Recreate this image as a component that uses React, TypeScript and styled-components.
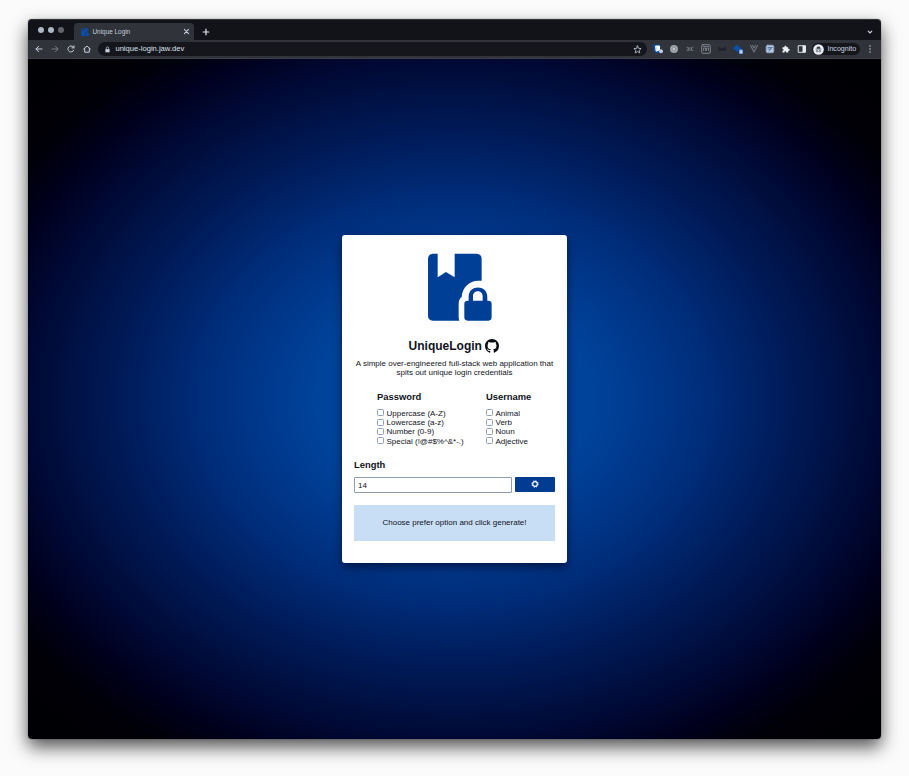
import React from "react";
import styled, { createGlobalStyle } from "styled-components";

const Global = createGlobalStyle`
  * { box-sizing: border-box; }
  body { margin: 0; background: #fbfbfb; font-family: "Liberation Sans", Arial, sans-serif; }
  h1, h2, p { margin: 0; }
`;

const Desktop = styled.div`
  width: 909px;
  height: 776px;
  padding: 19px 28px 36px;
  overflow: hidden;
`;

const Browser = styled.div`
  display: flex;
  flex-direction: column;
  height: 720px;
  border-radius: 4px;
  box-shadow: 0 0 1px rgba(0, 0, 0, 0.7), 0 8px 18px rgba(0, 0, 0, 0.68);
`;

const TabStrip = styled.div`
  display: flex;
  align-items: flex-end;
  height: 21px;
  flex: none;
  padding: 0 7px 0 10px;
  background: #111318;
  border-radius: 4px 4px 0 0;
  border-top: 1px solid #303238;
`;

const Lights = styled.div`
  display: flex;
  gap: 4px;
  width: 36px;
  height: 20px;
  align-items: center;
`;

const Light = styled.span<{ $dim?: boolean }>`
  width: 6px;
  height: 6px;
  border-radius: 50%;
  background: ${(p) => (p.$dim ? "#62656b" : "#aeb7c5")};
`;

const Tab = styled.div`
  display: flex;
  align-items: center;
  width: 120px;
  height: 17px;
  padding: 0 4px 0 7px;
  border-radius: 4px 4px 0 0;
  background: #30333a;
  color: #c5cddb;
  font: 6.4px/16px "Liberation Sans", Arial, sans-serif;
`;

const TabTitle = styled.span`
  flex: 1;
  margin-left: 3.5px;
`;

const NewTab = styled.div`
  display: flex;
  align-items: center;
  flex: 1;
  height: 17px;
  padding-left: 7.5px;
`;

const TabMenu = styled.div`
  display: flex;
  align-items: center;
  height: 17px;
`;

const Toolbar = styled.div`
  display: flex;
  align-items: center;
  height: 19px;
  flex: none;
  padding: 0 6px;
  background: #30333a;
  border-bottom: 1px solid #3c3f46;
`;

const NavButtons = styled.div`
  display: flex;
  gap: 6px;
  width: 64px;
`;

const AddressBar = styled.div`
  display: flex;
  align-items: center;
  flex: none;
  width: 549px;
  height: 14px;
  padding: 0 5px 0 6px;
  border-radius: 7px;
  background: #14161c;
  color: #dbe2ee;
  font: 7.6px/14px "Liberation Sans", Arial, sans-serif;
`;

const AddressArea = styled.div`
  flex: none;
  padding-left: 1px;
`;

const Url = styled.span`
  flex: 1;
  margin-left: 4px;
`;

const Extensions = styled.div`
  display: flex;
  align-items: center;
  gap: 6px;
  margin-left: 6px;
`;

const Profile = styled.div`
  display: flex;
  align-items: center;
  gap: 3px;
  width: 48px;
  height: 12px;
  margin-left: 5px;
  padding-left: 1px;
  border-radius: 6px;
  background: #14161c;
  color: #cfd6e3;
  font: 7.1px/12px "Liberation Sans", Arial, sans-serif;
`;

const MenuDots = styled.div`
  display: flex;
  margin-left: 5px;
`;

const Page = styled.main`
  display: flex;
  justify-content: center;
  flex: 1;
  padding-top: 176px;
  border-radius: 0 0 4px 4px;
  background: radial-gradient(ellipse farthest-corner at center, #0047a3 0%, #00439b 23%, #002f7e 40%, #001a57 56%, #001144 64%, #000833 71%, #00001c 79%, #000006 87%, #000003 100%);
`;

const Card = styled.section`
  display: flex;
  flex-direction: column;
  width: 225px;
  height: 328px;
  padding: 18px 12px 0;
  border-radius: 3px;
  background: #fff;
  color: #10131b;
  box-shadow: 0 4px 10px rgba(0, 0, 20, 0.55);
`;

const LogoRow = styled.div`
  display: flex;
  justify-content: center;
  height: 85px;
  padding-left: 10px;
`;

const Title = styled.h1`
  display: flex;
  align-items: center;
  justify-content: center;
  gap: 3.5px;
  height: 17px;
  padding-right: 1px;
  font-size: 12px;
  line-height: 17px;
`;

const Intro = styled.p`
  margin: 4px -4px 0;
  text-align: center;
  font-size: 8px;
  line-height: 9.4px;
`;

const Options = styled.div`
  display: grid;
  grid-template-columns: 109px 1fr;
  margin-top: 13px;
  padding-left: 23px;
`;

const Heading = styled.h2`
  font-size: 9.4px;
  line-height: 12px;
`;

const OptionList = styled.div`
  display: flex;
  flex-direction: column;
  margin-top: 6px;
`;

const Option = styled.label`
  display: flex;
  align-items: center;
  gap: 2.5px;
  height: 9.3px;
  font-size: 8px;
  line-height: 9.3px;
  white-space: nowrap;
`;

const Checkbox = styled.input`
  appearance: none;
  flex: none;
  width: 7px;
  height: 7px;
  margin: 0 0 1px;
  border: 1px solid #8fa0b9;
  border-radius: 1.5px;
  background: #fff;
`;

const LengthHeading = styled(Heading)`
  margin-top: 13px;
`;

const LengthRow = styled.div`
  display: flex;
  gap: 3px;
  margin-top: 6px;
`;

const LengthInput = styled.input`
  width: 158px;
  height: 16px;
  padding: 0 3px;
  border: 1px solid #8d9cb5;
  border-radius: 1px;
  color: #10131b;
  font: 8px "Liberation Sans", Arial, sans-serif;
`;

const Generate = styled.button`
  display: flex;
  align-items: center;
  justify-content: center;
  flex: 1;
  height: 15px;
  margin-top: 0.4px;
  padding: 0 0 1px;
  border: 0;
  border-radius: 1px;
  background: #003c91;
`;

const Result = styled.div`
  height: 36px;
  margin-top: 12px;
  background: #c8def5;
  text-align: center;
  font-size: 8px;
  line-height: 36px;
`;

const Glyph = ({ size = 10, color = "#c6cedc", children }: { size?: number; color?: string; children: React.ReactNode }) => (
  <svg width={size} height={size} viewBox="0 0 10 10" fill="none" stroke={color} strokeWidth="1" strokeLinecap="round" strokeLinejoin="round">
    {children}
  </svg>
);

const bookPath =
  "M52 26H68V97L93 81L119 97V26H186Q200 28 200 42V107H190C162 107 142 128 140 156C132 162 131 170 131 180V214Q131 222 133 227H54Q39 226 39 212V42Q40 27 52 26Z";
const lockPath =
  "M161 167V155C161 118 217 118 217 155V167H220Q230 167 230 177V217Q230 227 220 227H158Q148 227 148 217V177Q148 167 158 167ZM174 167H203V154C203 134 174 134 174 154Z";

const Book = ({ width, height, color = "#003f96" }: { width: number; height: number; color?: string }) => (
  <svg width={width} height={height} viewBox="36 24 196 204" fill={color}>
    <path d={bookPath} />
    <path d={lockPath} fillRule="evenodd" />
  </svg>
);

const GitHubMark = styled.svg`
  margin-bottom: 1px;
`;

const GitHub = () => (
  <GitHubMark width="14" height="14" viewBox="0 0 16 16" fill="#0b0d12">
    <path d="M8 0C3.58 0 0 3.58 0 8c0 3.54 2.29 6.53 5.47 7.59.4.07.55-.17.55-.38 0-.19-.01-.82-.01-1.49-2.01.37-2.53-.49-2.69-.94-.09-.23-.48-.94-.82-1.13-.28-.15-.68-.52-.01-.53.63-.01 1.08.58 1.23.82.72 1.21 1.87.87 2.33.66.07-.52.28-.87.51-1.07-1.78-.2-3.64-.89-3.64-3.95 0-.87.31-1.59.82-2.15-.08-.2-.36-1.02.08-2.12 0 0 .67-.21 2.2.82a7.6 7.6 0 0 1 4 0c1.53-1.04 2.2-.82 2.2-.82.44 1.1.16 1.92.08 2.12.51.56.82 1.27.82 2.15 0 3.07-1.87 3.75-3.65 3.95.29.25.54.73.54 1.48 0 1.07-.01 1.93-.01 2.2 0 .21.15.46.55.38A8.01 8.01 0 0 0 16 8c0-4.42-3.58-8-8-8z" />
  </GitHubMark>
);

const Gear = () => (
  <svg width="8" height="8" viewBox="0 0 16 16">
    <circle cx="8" cy="8" r="4.7" fill="none" stroke="#fff" strokeWidth="2.4" />
    <circle cx="8" cy="8" r="6.3" fill="none" stroke="#fff" strokeWidth="2" strokeDasharray="2.5 2.448" />
  </svg>
);

const ExtensionIcons = () => (
  <Extensions>
    <Glyph>
      <path d="M1 1H7V6Q7 8 4 9Q1 8 1 5Z" fill="#0b57b4" stroke="#0b4c9e" />
      <path d="M3 2H6.5V6L3.5 7Z" fill="#fff" stroke="#fff" />
      <circle cx="8" cy="7.3" r="2" fill="#c6cedc" stroke="none" />
    </Glyph>
    <Glyph>
      <circle cx="5" cy="5" r="4" fill="#9ba1aa" stroke="none" />
      <circle cx="5" cy="5" r="1.5" fill="#d5dae2" stroke="#7d828a" strokeWidth=".6" />
    </Glyph>
    <Glyph color="#858b96">
      <path d="M3.5 4H6.5V6H3.5ZM2 3.2L3.5 4M8 3.2L6.5 4M2 6.6L3.5 6M8 6.6L6.5 6" strokeWidth=".7" />
    </Glyph>
    <Glyph color="#9197a2">
      <rect x=".7" y=".7" width="8.6" height="8.6" rx="1.3" strokeWidth=".8" />
      <path d="M2.5 6.5V4H4.5V6.5M5.5 6.5V4H7.5V6.5M2.5 2.5H7.5" strokeWidth=".7" />
    </Glyph>
    <Glyph color="#15171c">
      <path d="M2 3.5V6.5M4 6.5V4.5L5 5.5L6 4.5V6.5M8 3.5V6.5" />
    </Glyph>
    <Glyph>
      <path d="M.7 4.2L3.7 1.2L7.8 4.4L4.7 7.3Z" fill="#0b4faa" stroke="#0b4faa" />
      <rect x="6" y="5.6" width="4" height="4.4" rx="1" fill="#6fa5ed" stroke="none" />
      <path d="M8 7V8.6" stroke="#fff" />
    </Glyph>
    <Glyph color="#70757f">
      <path d="M1.5 1.5L5 8L8.5 1.5M3.6 1.5L5 4L6.4 1.5" strokeWidth="1.1" />
    </Glyph>
    <Glyph>
      <rect x="1.2" y="1.2" width="7.5" height="7.5" rx="1.5" fill="#b8c8df" stroke="#91a5c2" />
      <path d="M3 3.5H7M3 5H6M4 7L7 3.5" stroke="#426796" strokeWidth=".8" />
    </Glyph>
    <Glyph>
      <path d="M1.5 3.3H3.5C2.8 1.2 6 1.2 5.5 3.3H7.2V5C9.4 4.5 9.4 7.2 7.2 6.8V8.6H5.2C5.3 6.7 3.4 6.7 3.5 8.6H1.5V6.8C3 6.7 3 5 1.5 5Z" fill="#eef2f9" stroke="none" />
    </Glyph>
    <Glyph>
      <rect x="1.6" y="1.7" width="6.8" height="6.6" stroke="#dbe1eb" />
      <path d="M6 2H8.5V8H6Z" fill="#e9edf5" stroke="#e9edf5" strokeWidth=".5" />
    </Glyph>
  </Extensions>
);

const passwordOptions = ["Uppercase (A-Z)", "Lowercase (a-z)", "Number (0-9)", "Special (!@#$%^&*-.)"];
const usernameOptions = ["Animal", "Verb", "Noun", "Adjective"];

const OptionGroup = ({ title, items }: { title: string; items: string[] }) => (
  <div>
    <Heading>{title}</Heading>
    <OptionList>
      {items.map((item) => (
        <Option key={item}>
          <Checkbox type="checkbox" />
          {item}
        </Option>
      ))}
    </OptionList>
  </div>
);

export default function App() {
  return (
    <>
      <Global />
      <Desktop>
        <Browser>
          <TabStrip>
            <Lights>
              <Light />
              <Light />
              <Light $dim />
            </Lights>
            <Tab>
              <Book width={8} height={8} color="#0650b4" />
              <TabTitle>Unique Login</TabTitle>
              <Glyph size={7}><path d="M2 2L8 8M8 2L2 8" strokeWidth="1.5" /></Glyph>
            </Tab>
            <NewTab>
              <Glyph size={8} color="#e4e9f2"><path d="M5 1.5V8.5M1.5 5H8.5" strokeWidth="1.5" /></Glyph>
            </NewTab>
            <TabMenu>
              <Glyph size={8}><path d="M2.8 4L5 6.2L7.2 4" strokeWidth="1.5" /></Glyph>
            </TabMenu>
          </TabStrip>
          <Toolbar>
            <NavButtons>
              <Glyph><path d="M8 5H2M4.6 2.3L2 5L4.6 7.7" /></Glyph>
              <Glyph color="#747a85"><path d="M2 5H8M5.4 2.3L8 5L5.4 7.7" /></Glyph>
              <Glyph><path d="M7.7 6.2A3 3 0 1 1 7.2 3L8 3.8M8 1.8V3.9H5.9" /></Glyph>
              <Glyph><path d="M1.6 5L5 2L8.4 5M2.7 4.5V8.2H7.3V4.5" /></Glyph>
            </NavButtons>
            <AddressArea>
              <AddressBar>
                <Glyph size={7}>
                  <rect x="2" y="4.5" width="6" height="4.5" fill="#c6cedc" stroke="none" />
                  <path d="M3.3 4.5V3A1.7 1.7 0 0 1 6.7 3V4.5" />
                </Glyph>
                <Url>unique-login.jaw.dev</Url>
                <Glyph size={9}>
                  <path d="M5 1L6.2 3.7L9 4L6.9 5.9L7.5 8.8L5 7.3L2.5 8.8L3.1 5.9L1 4L3.8 3.7Z" strokeWidth=".9" />
                </Glyph>
              </AddressBar>
            </AddressArea>
            <ExtensionIcons />
            <Profile>
              <svg width="11" height="11" viewBox="0 0 11 11">
                <circle cx="5.5" cy="5.5" r="5.3" fill="#edf1f7" />
                <path d="M2.4 5.2H8.6M3.8 4.6L4.2 2.9H6.8L7.2 4.6Z" fill="#343a45" stroke="#343a45" strokeWidth=".5" />
                <circle cx="4.1" cy="7.2" r=".9" fill="none" stroke="#343a45" strokeWidth=".6" />
                <circle cx="6.9" cy="7.2" r=".9" fill="none" stroke="#343a45" strokeWidth=".6" />
              </svg>
              Incognito
            </Profile>
            <MenuDots>
              <Glyph>
                <path d="M5 2V2M5 5V5M5 8V8" strokeWidth="1.5" />
              </Glyph>
            </MenuDots>
          </Toolbar>
          <Page>
            <Card>
              <LogoRow><Book width={65.3} height={68} /></LogoRow>
              <Title>UniqueLogin <GitHub /></Title>
              <Intro>
                A simple over-engineered full-stack web application that<br />
                spits out unique login credentials
              </Intro>
              <Options>
                <OptionGroup title="Password" items={passwordOptions} />
                <OptionGroup title="Username" items={usernameOptions} />
              </Options>
              <LengthHeading>Length</LengthHeading>
              <LengthRow>
                <LengthInput defaultValue="14" />
                <Generate aria-label="Generate"><Gear /></Generate>
              </LengthRow>
              <Result>Choose prefer option and click generate!</Result>
            </Card>
          </Page>
        </Browser>
      </Desktop>
    </>
  );
}
